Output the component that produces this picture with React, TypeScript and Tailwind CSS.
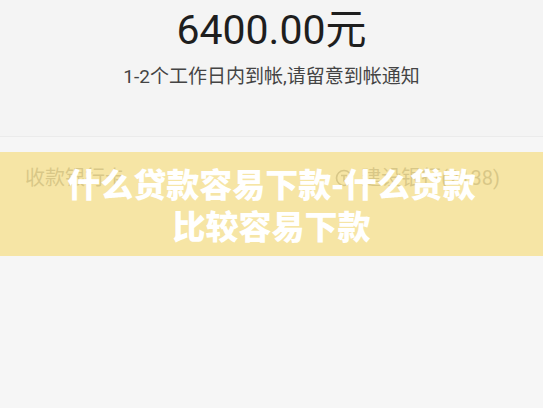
import React from 'react';

const font = { fontFamily: '"Roboto", "Noto Sans CJK SC", sans-serif' };
const cjk = { fontFamily: '"Noto Sans CJK SC", sans-serif' };

const BankIcon = () => (
  <svg width="18" height="18" viewBox="0 0 18 18" className="mr-2">
    <circle cx="9" cy="9" r="7.5" fill="none" stroke="#555" strokeWidth="1.6" />
    <path d="M6 6.5h6M9 6.5v6" stroke="#555" strokeWidth="1.6" fill="none" />
  </svg>
);

const App = () => {
  return (
    <div className="relative w-[543px] h-[408px] overflow-hidden bg-[#f6f6f6]" style={font}>
      {/* amount summary */}
      <div className="h-[137px] bg-[#f4f4f4] border-b border-[#ebebeb] flex flex-col items-center">
        <div className="mt-[5px] text-[41px] leading-[50px] text-[#1e1e1e]">6400.00元</div>
        <div className="mt-[10px] text-[19px] leading-[24px] text-[#444]">1-2个工作日内到帐,请留意到帐通知</div>
      </div>

      {/* receiving account */}
      <div className="mt-[3px] h-[76px] bg-[#f6f6f6] flex items-center justify-between px-[25px]">
        <span className="text-[20px] text-[#555]">收款银行卡</span>
        <span className="flex items-center text-[20px] text-[#555] pr-[18px]">
          <BankIcon />
          建设银行(2138)
        </span>
      </div>

      {/* title banner */}
      <div className="absolute left-0 right-0 top-[152px] h-[104px] bg-[#f5e193]/[0.82] flex flex-col items-center justify-center">
        <div className="text-[33px] leading-[42px] font-black text-white" style={cjk}>
          什么贷款容易下款-什么贷款
        </div>
        <div className="text-[33px] leading-[42px] font-black text-white" style={cjk}>
          比较容易下款
        </div>
      </div>
    </div>
  );
};

export default App;
